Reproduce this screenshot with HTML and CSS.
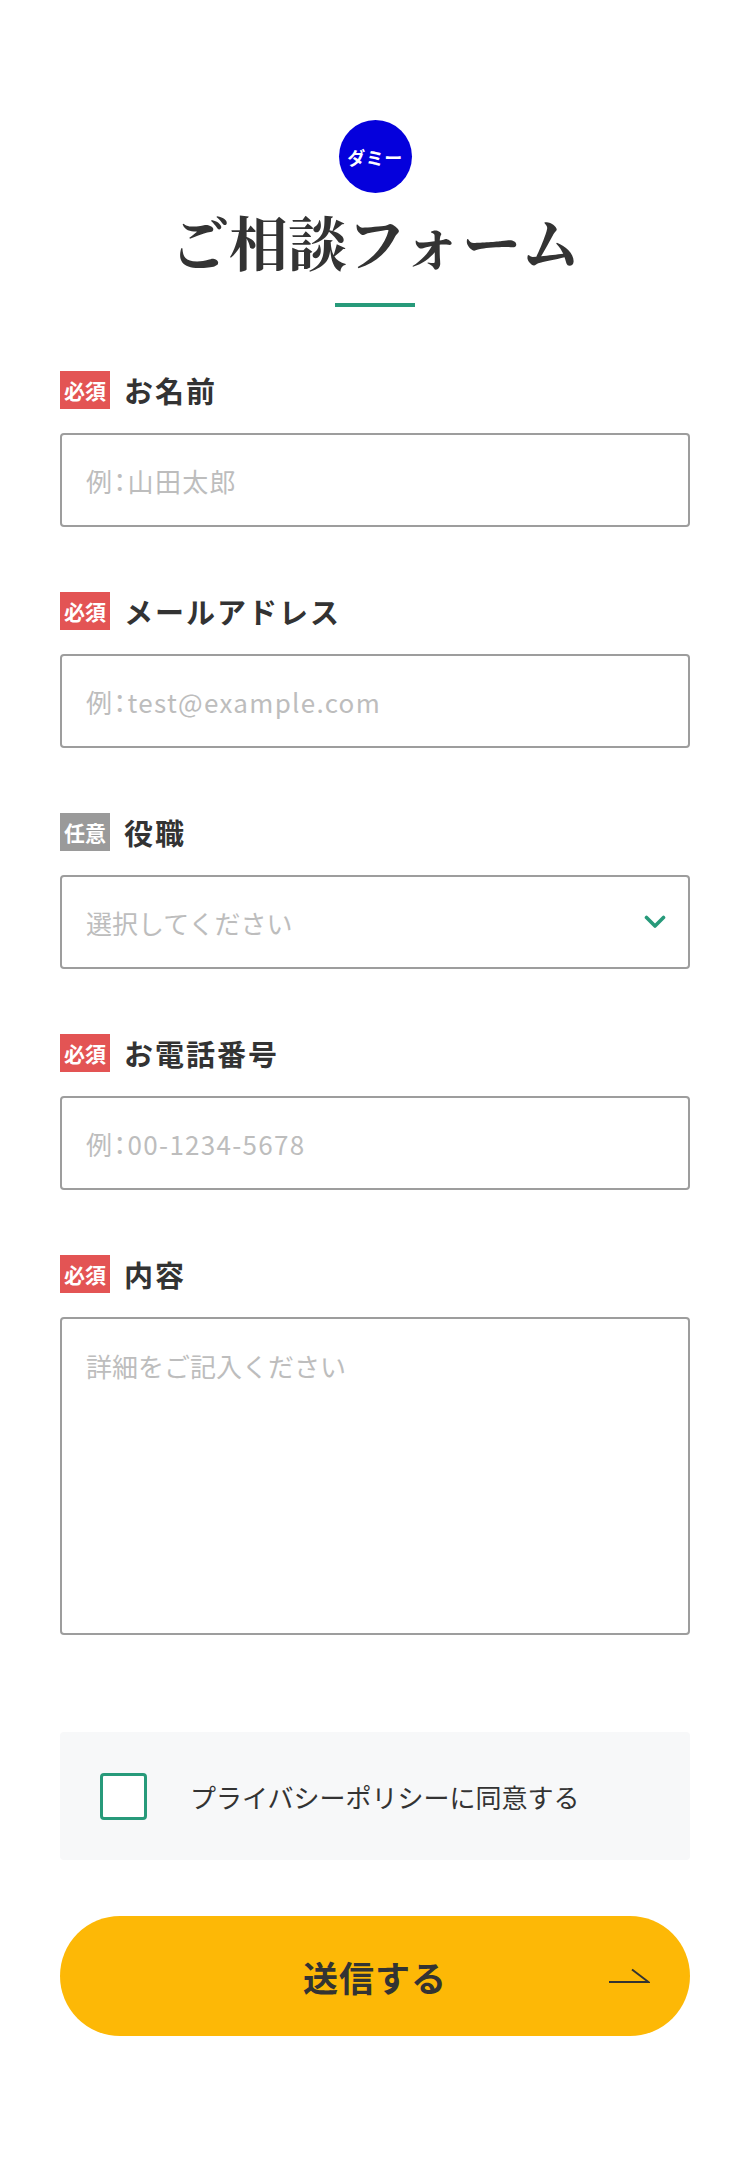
FILE: index.html
```html
<!DOCTYPE html>
<html lang="ja">
<head>
<meta charset="utf-8">
<title>ご相談フォーム</title>
<link rel="stylesheet" href="styles.css">
</head>
<body>
<main class="page">
  <header class="head">
    <div class="dummy">ダミー</div>
    <h1 class="title">ご相談フォーム</h1>
    <span class="rule"></span>
  </header>

  <form class="form">
    <div class="field">
      <div class="label-row"><span class="tag tag-req">必須</span><span class="label">お名前</span></div>
      <input class="control text-input" type="text" placeholder="例：山田太郎">
    </div>
    <div class="field">
      <div class="label-row"><span class="tag tag-req">必須</span><span class="label">メールアドレス</span></div>
      <input class="control text-input" type="email" placeholder="例：test@example.com">
    </div>
    <div class="field">
      <div class="label-row"><span class="tag tag-opt">任意</span><span class="label">役職</span></div>
      <div class="select-wrap">
        <select class="control select">
          <option>選択してください</option>
        </select>
        <svg class="chev" width="22" height="14" viewBox="0 0 22 14"><polyline points="2.5,2.5 11,11 19.5,2.5" fill="none" stroke="#279a7a" stroke-width="3.6" stroke-linecap="round" stroke-linejoin="round"/></svg>
      </div>
    </div>
    <div class="field">
      <div class="label-row"><span class="tag tag-req">必須</span><span class="label">お電話番号</span></div>
      <input class="control text-input" type="tel" placeholder="例：00-1234-5678">
    </div>
    <div class="field field-last">
      <div class="label-row"><span class="tag tag-req">必須</span><span class="label">内容</span></div>
      <textarea class="control area" placeholder="詳細をご記入ください"></textarea>
    </div>

    <label class="privacy">
      <input class="check" type="checkbox">
      <span class="privacy-text">プライバシーポリシーに同意する</span>
    </label>

    <button class="submit" type="button">
      <span></span>
      <span class="submit-text">送信する</span>
      <svg class="arrow" width="41" height="16" viewBox="0 0 41 16"><path d="M0 14 H39.5 L23 1.5" fill="none" stroke="#333" stroke-width="2"/></svg>
    </button>
  </form>
</main>
</body>
</html>
```

FILE: styles.css
```css
* { box-sizing: border-box; }
html, body { margin: 0; padding: 0; background: #fff; }
body {
  font-family: "Noto Sans CJK JP", "Noto Sans", sans-serif;
  color: #333;
}
.page {
  padding: 120px 60px 120px;
}
.head {
  display: flex;
  flex-direction: column;
  align-items: center;
}
.dummy {
  width: 73px;
  height: 73px;
  border-radius: 50%;
  background: #0500dc;
  color: #fff;
  font-size: 18px;
  font-weight: 700;
  display: flex;
  align-items: center;
  justify-content: center;
  letter-spacing: 0.5px;
}
.title {
  margin: 7px 0 0;
  font-family: "Noto Serif CJK JP", "Noto Sans CJK JP", serif;
  font-size: 59px;
  line-height: 82px;
  font-weight: 700;
  color: #333;
}
.rule {
  display: block;
  width: 80px;
  height: 4px;
  margin-top: 21px;
  background: #279a7a;
}
.form {
  margin-top: 62px;
  display: flex;
  flex-direction: column;
}
.field {
  display: flex;
  flex-direction: column;
  margin-bottom: 63px;
}
.field-last { margin-bottom: 0; }
.label-row {
  display: flex;
  align-items: center;
  gap: 14px;
  height: 42px;
  margin-bottom: 22px;
}
.tag {
  width: 50px;
  height: 38px;
  display: flex;
  align-items: center;
  justify-content: center;
  color: #fff;
  font-size: 21px;
  font-weight: 700;
  letter-spacing: 0;
}
.tag-req { background: #e35454; }
.tag-opt { background: #9a9a9a; }
.label {
  font-size: 29px;
  font-weight: 700;
  letter-spacing: 2px;
  line-height: 42px;
  color: #333;
}
.control {
  display: block;
  width: 100%;
  height: 94px;
  border: 2px solid #9d9d9d;
  border-radius: 4px;
  padding: 0 24px;
  font-family: "Noto Sans CJK JP", "Noto Sans", sans-serif;
  font-size: 26px;
  letter-spacing: 0;
  color: #333;
  background: #fff;
  outline: none;
}
.text-input {
  letter-spacing: 1.3px;
  font-feature-settings: "palt";
}
.control::placeholder { color: #bdbdbd; }
.select-wrap { position: relative; }
.select {
  appearance: none;
  -webkit-appearance: none;
  color: #bdbdbd;
}
.chev {
  position: absolute;
  right: 24px;
  top: 40px;
  pointer-events: none;
}
.area {
  height: 318px;
  padding: 26px 24px;
  resize: none;
  line-height: 1.6;
}
.privacy {
  margin-top: 97px;
  height: 128px;
  background: #f7f8f9;
  border-radius: 4px;
  display: flex;
  align-items: center;
  padding-left: 40px;
  gap: 43px;
}
.check {
  appearance: none;
  -webkit-appearance: none;
  margin: 0;
  width: 47px;
  height: 47px;
  border: 3.5px solid #279a7a;
  border-radius: 4px;
  background: #fff;
  flex: none;
}
.privacy-text {
  font-size: 26px;
  color: #333;
}
.submit {
  margin-top: 56px;
  height: 120px;
  border: none;
  border-radius: 60px;
  background: #fdb806;
  display: grid;
  grid-template-columns: 1fr auto 1fr;
  align-items: center;
  padding: 0 40px;
  font-family: "Noto Sans CJK JP", "Noto Sans", sans-serif;
  color: #333;
  cursor: pointer;
}
.submit-text {
  font-size: 35px;
  font-weight: 700;
  letter-spacing: 1px;
}
.arrow {
  justify-self: end;
}
```
